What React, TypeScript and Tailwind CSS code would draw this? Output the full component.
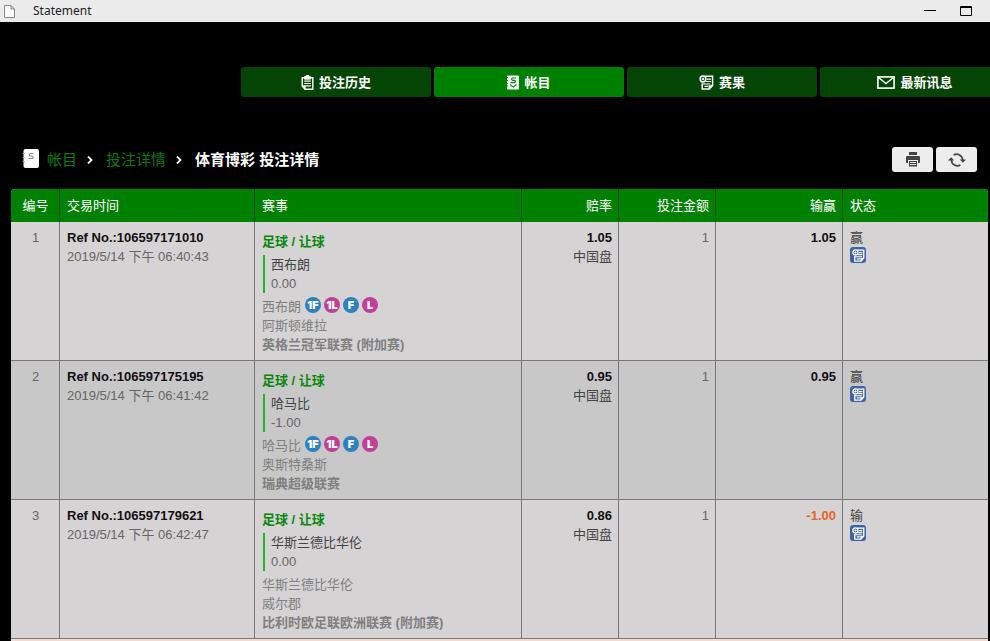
import type { ReactNode } from "react";
import { clsx } from "clsx";

interface Bet {
  id: number;
  refNo: string;
  time: string;
  pick: string;
  handicap: string;
  home: string;
  away: string;
  league: string;
  odds: string;
  stake: string;
  winLoss: string;
  status: string;
  scores: boolean;
}

const bets: Bet[] = [
  {
    id: 1,
    refNo: "106597171010",
    time: "2019/5/14 下午 06:40:43",
    pick: "西布朗",
    handicap: "0.00",
    home: "西布朗",
    away: "阿斯顿维拉",
    league: "英格兰冠军联赛 (附加赛)",
    odds: "1.05",
    stake: "1",
    winLoss: "1.05",
    status: "赢",
    scores: true,
  },
  {
    id: 2,
    refNo: "106597175195",
    time: "2019/5/14 下午 06:41:42",
    pick: "哈马比",
    handicap: "-1.00",
    home: "哈马比",
    away: "奥斯特桑斯",
    league: "瑞典超级联赛",
    odds: "0.95",
    stake: "1",
    winLoss: "0.95",
    status: "赢",
    scores: true,
  },
  {
    id: 3,
    refNo: "106597179621",
    time: "2019/5/14 下午 06:42:47",
    pick: "华斯兰德比华伦",
    handicap: "0.00",
    home: "华斯兰德比华伦",
    away: "威尔郡",
    league: "比利时欧足联欧洲联赛 (附加赛)",
    odds: "0.86",
    stake: "1",
    winLoss: "-1.00",
    status: "输",
    scores: false,
  },
];

function ClipboardIcon() {
  return (
    <svg width="13" height="15" viewBox="0 0 13 15" fill="none" stroke="currentColor" aria-hidden>
      <path d="M1.2 2.7h10.6v11.6H4L1.2 11z" strokeWidth="1.4" />
      <path d="M3.5 1.6h1.7V.5h2.6v1.1h1.7v2.6h-6z" fill="currentColor" strokeWidth="0.8" />
      <path d="M3.2 6.2h6.6M3.2 8.5h6.6M4.5 10.8h5.3" strokeWidth="1.2" />
      <path d="M1.2 10.5h3.2v3.8z" fill="currentColor" strokeWidth="0.6" />
    </svg>
  );
}

function LedgerIcon() {
  return (
    <svg width="12" height="15" viewBox="0 0 12 15" aria-hidden>
      <path d="M1 .5h10a1 1 0 0 1 1 1v12a1 1 0 0 1-1 1H1a1 1 0 0 1-1-1v-2h1v-1H0V9h1V8H0V6h1V5H0V3h1V2H0v-.5a1 1 0 0 1 1-1z" fill="currentColor" />
      <path d="M9 3H5.5a1.2 1.2 0 0 0 0 2.3h2a1.2 1.2 0 0 1 0 2.3H3.5M3 9.5l3.2 2.6 3.2-2.6" fill="none" stroke="#008000" strokeWidth="1.2" />
    </svg>
  );
}

function ScrollIcon({ size = 15 }: { size?: number }) {
  return (
    <svg width={size} height={size} viewBox="0 0 15 15" fill="none" stroke="currentColor" aria-hidden>
      <circle cx="4" cy="4" r="2.9" strokeWidth="1.5" />
      <circle cx="4" cy="4" r="1" fill="currentColor" strokeWidth="0.6" />
      <path d="M6 1.2h7.6v9.3L10.4 14H3.2V8.2" strokeWidth="1.5" />
      <path d="M8 4.2h4M7.2 6.5h4.8M3.5 9h8M5.5 11.4h3.5" strokeWidth="1.2" />
      <path d="M9.8 10.5h3.8L9.8 14z" fill="currentColor" strokeWidth="0.5" />
    </svg>
  );
}

function MailIcon() {
  return (
    <svg width="18" height="13" viewBox="0 0 18 13" fill="none" stroke="currentColor" strokeWidth="1.6" aria-hidden>
      <rect x="0.9" y="0.9" width="16.2" height="11.2" />
      <path d="M1.5 1.5L9 7.5l7.5-6" />
    </svg>
  );
}

function BookIcon() {
  return (
    <svg className="mb-[3px]" width="18" height="19" viewBox="0 0 18 19" aria-hidden>
      <path d="M3.5 0h11.5a2 2 0 0 1 2 2v15a2 2 0 0 1-2 2H3.5a2 2 0 0 1-2-2V2a2 2 0 0 1 2-2z" fill="#fff" />
      <path d="M.5 4.5H3M.5 8.5H3M.5 12.5H3" stroke="#aaa" strokeWidth="1" />
      <path d="M11.5 4.5H8.3a1.3 1.3 0 0 0 0 2.5h1.9a1.3 1.3 0 0 1 0 2.5H6.7" fill="none" stroke="#888" strokeWidth="1.1" />
    </svg>
  );
}

function PrintIcon() {
  return (
    <svg width="14" height="15" viewBox="0 0 14 15" fill="#444" aria-hidden>
      <path d="M3 0h8v3H3zM1 4h12a1 1 0 0 1 1 1v5a1 1 0 0 1-1 1h-1V8H2v3H1a1 1 0 0 1-1-1V5a1 1 0 0 1 1-1z" />
      <path d="M3 9h8v5.5H3z" />
      <path d="M4 10.5h6M4 12.5h6" stroke="#eee" strokeWidth="0.9" />
    </svg>
  );
}

function RefreshIcon() {
  return (
    <svg width="18" height="14" viewBox="0 0 18 14" fill="none" stroke="#444" strokeWidth="1.7" aria-hidden>
      <path d="M5.6 2A6 6 0 0 1 14.6 7M12.4 12A6 6 0 0 1 3.4 7" />
      <path d="M11.8 6.4H18l-3.1 3.4zM0 7.6h6.2L3.1 4.2z" fill="#444" stroke="none" />
    </svg>
  );
}

function Chevron() {
  return (
    <svg className="ml-[10px] mr-[13px]" width="6" height="8" viewBox="0 0 6 8" fill="none" stroke="#fff" strokeWidth="1.8" aria-hidden>
      <path d="M1 0.5L4.5 4 1 7.5" />
    </svg>
  );
}

interface Tab {
  label: string;
  icon: ReactNode;
  active?: boolean;
}

const tabs: Tab[] = [
  { label: "投注历史", icon: <ClipboardIcon /> },
  { label: "帐目", icon: <LedgerIcon />, active: true },
  { label: "赛果", icon: <ScrollIcon /> },
  { label: "最新讯息", icon: <MailIcon /> },
];

const scoreBadges = [
  { label: "1F", color: "bg-[#2f80be]" },
  { label: "1L", color: "bg-[#c13f97]" },
  { label: "F", color: "bg-[#2f80be]" },
  { label: "L", color: "bg-[#c13f97]" },
];

const columns = [
  { label: "编号", className: "w-[49px] text-center" },
  { label: "交易时间", className: "w-[195px] text-left" },
  { label: "赛事", className: "text-left" },
  { label: "赔率", className: "w-[97px] text-right" },
  { label: "投注金额", className: "w-[97px] text-right" },
  { label: "输赢", className: "w-[127px] text-right" },
  { label: "状态", className: "w-[145px] text-left" },
];

function TitleBar() {
  return (
    <header className="flex h-[22px] items-center bg-[#ebebeb] pl-1 pr-[18px] text-black">
      <svg width="11" height="13" viewBox="0 0 11 13" fill="#fafafa" stroke="#888" aria-hidden>
        <path d="M0.5 0.5h6.5l3.5 3.5v8.5H0.5zM7 0.5V4h3.5" />
      </svg>
      <h1 className="ml-[18px] flex-1 pb-px font-['Noto_Sans','Open_Sans',sans-serif] text-[12px] leading-5 text-[#222]">
        Statement
      </h1>
      <button type="button" aria-label="Minimize" className="mr-6">
        <svg width="12" height="12" viewBox="0 0 12 12" stroke="#000" aria-hidden>
          <path d="M0 5.5h12" />
        </svg>
      </button>
      <button type="button" aria-label="Maximize">
        <svg width="12" height="10" viewBox="0 0 12 10" fill="none" stroke="#000" aria-hidden>
          <path d="M0.5 0.5h11v9H0.5zM0 1.5h12" />
        </svg>
      </button>
    </header>
  );
}

function BetRow({ bet }: { bet: Bet }) {
  const cell = "border-b border-r border-[#777] pl-[7px] pr-[6px] pt-[6px]";

  return (
    <tr className="bg-[#d5d3d4] align-top even:bg-[#c8c8c8]">
      <td className={clsx(cell, "text-center")}>{bet.id}</td>
      <td className={cell}>
        <div className="font-bold text-[#111]">Ref No.:{bet.refNo}</div>
        <div>{bet.time}</div>
      </td>
      <td className="border-b border-r border-[#777] px-[7px] pb-[6px] pt-[10px] text-[#808080]">
        <div className="font-bold text-[#0a870a]">足球 / 让球</div>
        <div className="my-1 ml-px border-l-2 border-[#27b327] pl-[6px] text-[#666]">
          <div className="text-[#444]">{bet.pick}</div>
          <div>{bet.handicap}</div>
        </div>
        <div className="flex gap-1">
          <span>{bet.home}</span>
          {bet.scores && (
            <span className="flex gap-[3px]">
              {scoreBadges.map((badge) => (
                <span
                  key={badge.label}
                  className={clsx(
                    "flex size-4 items-center justify-center rounded-full font-['Inter','Liberation_Sans',sans-serif] text-[11px] font-black leading-4 text-white",
                    badge.color,
                  )}
                >
                  {badge.label}
                </span>
              ))}
            </span>
          )}
        </div>
        <div>{bet.away}</div>
        <div className="font-bold">{bet.league}</div>
      </td>
      <td className={clsx(cell, "text-right")}>
        <div className="font-bold text-[#111]">{bet.odds}</div>
        <div className="text-[#444]">中国盘</div>
      </td>
      <td className={clsx(cell, "text-right")}>{bet.stake}</td>
      <td
        className={clsx(
          cell,
          "text-right font-bold",
          bet.winLoss.startsWith("-") ? "text-[#e8641f]" : "text-[#111]",
        )}
      >
        {bet.winLoss}
      </td>
      <td className="border-b border-[#777] px-[7px] pt-[6px] text-[#444]">
        <div>{bet.status}</div>
        <button
          type="button"
          aria-label="赛果"
          className="flex size-4 items-center justify-center rounded-[3px] bg-[#3f63a3] text-white"
        >
          <ScrollIcon size={13} />
        </button>
      </td>
    </tr>
  );
}

export default function App() {
  return (
    <div className="min-h-screen overflow-hidden bg-black font-['Liberation_Sans','Noto_Sans_CJK_SC',sans-serif] text-[13px] leading-[19px]">
      <TitleBar />

      {/* Tabs run past the right edge on narrow windows */}
      <nav className="mt-[45px] flex gap-[3px] pl-[241px]">
        {tabs.map((tab) => (
          <a
            key={tab.label}
            href="#"
            className={clsx(
              "flex h-[30px] w-[190px] shrink-0 items-center justify-center gap-[5px] rounded-[3px] font-bold text-white",
              tab.active ? "bg-[#008000]" : "bg-[#044404]",
            )}
          >
            {tab.icon}
            <span>{tab.label}</span>
          </a>
        ))}
      </nav>

      <main className="pl-[11px] pr-[2px]">
        <div className="mt-[50px] flex items-center justify-between px-[11px]">
          <div className="flex items-center text-[15px] leading-6 text-[#0a7a0a]">
            <BookIcon />
            <a href="#" className="ml-[7px]">帐目</a>
            <Chevron />
            <a href="#">投注详情</a>
            <Chevron />
            <span className="font-bold text-white">体育博彩 投注详情</span>
          </div>
          <div className="flex gap-[3px]">
            <button type="button" aria-label="打印" className="flex h-[25px] w-[41px] items-center justify-center rounded-[3px] bg-[#ededed]">
              <PrintIcon />
            </button>
            <button type="button" aria-label="刷新" className="flex h-[25px] w-[41px] items-center justify-center rounded-[3px] bg-[#ededed]">
              <RefreshIcon />
            </button>
          </div>
        </div>

        <div className="mt-[17px] overflow-hidden rounded-t-[4px] bg-[#f3dccf] pb-1">
          <table className="w-full table-fixed border-separate border-spacing-0 text-[#666]">
            <thead>
              <tr className="bg-[#008000] text-white">
                {columns.map((col) => (
                  <th
                    key={col.label}
                    scope="col"
                    className={clsx(
                      "border-r border-[#0a4a0a] py-[7px] pl-[7px] pr-[6px] font-normal last:border-r-0",
                      col.className,
                    )}
                  >
                    {col.label}
                  </th>
                ))}
              </tr>
            </thead>
            <tbody>
              {bets.map((bet) => (
                <BetRow key={bet.id} bet={bet} />
              ))}
            </tbody>
          </table>
        </div>
      </main>
    </div>
  );
}
